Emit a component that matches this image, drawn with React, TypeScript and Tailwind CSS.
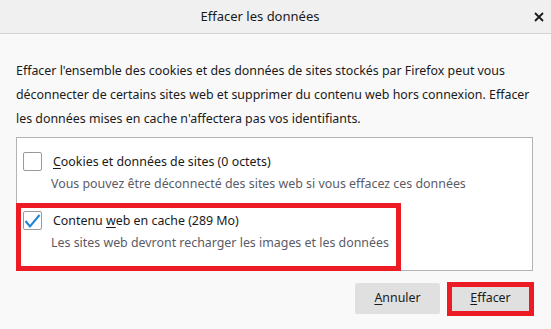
import { ReactNode } from "react";

// Underlined access-key letter, like native Windows dialogs
function Key({ children }: { children: ReactNode }) {
    return <span className="underline underline-offset-2">{children}</span>;
}

function Checkbox({ checked }: { checked?: boolean }) {
    return (
        <div className="w-[19px] h-[19px] shrink-0 bg-white border border-[#9a9a9a] rounded-[2px] flex items-center justify-center">
            {checked && (
                <svg width="17" height="17" viewBox="0 0 17 17" fill="none">
                    <path d="M1.5 9 L6 14.5 L15.5 3" stroke="#1a86d8" strokeWidth="2" />
                </svg>
            )}
        </div>
    );
}

interface ItemProps {
    checked?: boolean;
    label: ReactNode;
    description: string;
}

function Item({ checked, label, description }: ItemProps) {
    return (
        <div className="pl-[6px]">
            <div className="flex items-center h-[19px]">
                <Checkbox checked={checked} />
                <span className="ml-[11px] leading-[20px] text-[#1a1a1a]">{label}</span>
            </div>
            <div className="ml-[28px] mt-[3px] leading-[20px] text-[#5b5b66]">{description}</div>
        </div>
    );
}

export default function App() {
    return (
        <div className="w-[551px] h-[329px] bg-[#f9f9f9] font-['Noto_Sans',sans-serif] text-[12.4px] text-[#1a1a1a] overflow-hidden">
            <div className="h-[34px] bg-[#f0f0f0] border-b border-[#d4d4d4] flex items-center">
                <div className="flex-1 text-center text-[13px] text-[#1a1a1a]">Effacer les données</div>
                <div className="w-[31px] pl-[14px] flex items-center">
                    <svg width="10" height="10" viewBox="0 0 10 10">
                        <path d="M1 1 L9 9 M9 1 L1 9" stroke="#1a1a1a" strokeWidth="1.8" />
                    </svg>
                </div>
            </div>
            <div className="pl-[16px] pr-[18px] pt-[25px]">
                <p className="leading-[24px] whitespace-nowrap">
                    Effacer l'ensemble des cookies et des données de sites stockés par Firefox peut vous
                    <br />
                    déconnecter de certains sites web et supprimer du contenu web hors connexion. Effacer
                    <br />
                    les données mises en cache n'affectera pas vos identifiants.
                </p>
                <div className="relative mt-[6px] bg-white border border-[#b3b3b3] pt-[14px] pb-[17px] flex flex-col gap-[17px]">
                    <Item
                        label={<><Key>C</Key>ookies et données de sites (0 octets)</>}
                        description="Vous pouvez être déconnecté des sites web si vous effacez ces données"
                    />
                    <Item
                        checked
                        label={<>Contenu <Key>w</Key>eb en cache (289 Mo)</>}
                        description="Les sites web devront recharger les images et les données"
                    />
                    {/* highlight annotation */}
                    <span className="absolute left-[-1px] bottom-[-1px] top-[65px] w-[385px] border-[5px] border-[#ed1c24]" />
                </div>
                <div className="mt-[12px] flex justify-end gap-[8px]">
                    <button className="w-[85px] h-[31px] rounded-[2px] bg-[#e0e0e0] text-[#1a1a1a]">
                        <Key>A</Key>nnuler
                    </button>
                    <div className="relative">
                        <button className="w-[85px] h-[31px] rounded-[2px] bg-[#e0e0e0] text-[#1a1a1a]">
                            <Key>E</Key>ffacer
                        </button>
                        <span className="absolute -left-[1px] -right-[1px] -top-[1px] -bottom-[2px] border-[5px] border-[#ed1c24]" />
                    </div>
                </div>
            </div>
        </div>
    );
}
